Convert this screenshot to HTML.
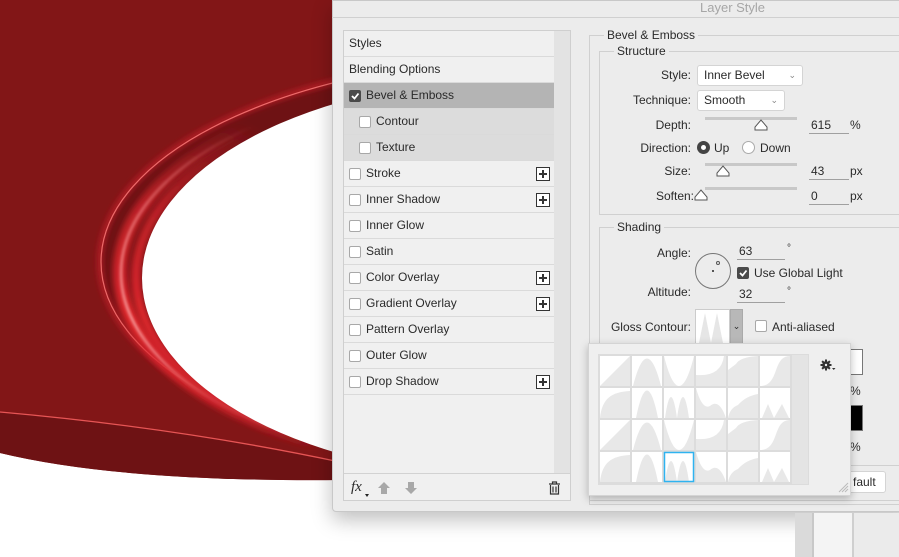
<!DOCTYPE html>
<html><head><style>
*{margin:0;padding:0;box-sizing:border-box}
body{width:899px;height:557px;overflow:hidden;background:#fff;font-family:"Liberation Sans",sans-serif;font-size:12px;color:#2a2a2a;position:relative}
.a{position:absolute}
.row{position:absolute;left:344px;width:210px;height:26px;border-bottom:1px solid #dadada;line-height:25px}
.cb{position:absolute;width:12px;height:12px;border:1px solid #a8a8a8;border-radius:2px;background:#fff;top:7px}
.cbc{background:#4a4a4a;border-color:#4a4a4a}
.plus{position:absolute;left:192px;top:6px;width:14px;height:14px;border:1px solid #333;background:#fff}
.plus:before{content:"";position:absolute;left:2px;top:5px;width:8px;height:2px;background:#333}
.plus:after{content:"";position:absolute;left:5px;top:2px;width:2px;height:8px;background:#333}
.lbl{position:absolute;text-align:right;width:120px}
.sel{position:absolute;background:#fff;border:1px solid #d4d4d4;border-radius:3px;height:21px;line-height:19px;padding-left:6px}
.trk{position:absolute;height:3px;background:#c8c8c8;width:92px;left:705px}
.val{position:absolute;border-bottom:1px solid #a0a0a0;width:40px;height:16px;line-height:14px;padding-left:2px}
</style></head><body>
<svg class="a" style="left:0;top:0" width="340" height="557">
<defs>
<filter id="bl"><feGaussianBlur stdDeviation="3"/></filter>
<filter id="bl2"><feGaussianBlur stdDeviation="1.2"/></filter>
<clipPath id="cp"><path d="M0,0 H340 V480 Q120,482 0,453 Z"/></clipPath>
<radialGradient id="g1" gradientUnits="userSpaceOnUse" cx="130" cy="320" r="230">
<stop offset="0" stop-color="#e0262c" stop-opacity="1"/><stop offset="0.5" stop-color="#d0232a" stop-opacity="0.8"/><stop offset="1" stop-color="#c0202a" stop-opacity="0"/></radialGradient>
<radialGradient id="g2" gradientUnits="userSpaceOnUse" cx="130" cy="320" r="230">
<stop offset="0" stop-color="#f39090" stop-opacity="1"/><stop offset="0.5" stop-color="#f08080" stop-opacity="0.6"/><stop offset="1" stop-color="#f08080" stop-opacity="0"/></radialGradient>
</defs>
<path d="M0,0 H340 V480 Q120,482 0,453 Z" fill="#821617"/>
<g clip-path="url(#cp)">
<path d="M0,412 Q180,428 340,462 V490 H0Z" fill="#6e1214"/>
<path d="M0,412 Q180,428 340,462" stroke="#e65555" stroke-width="1.3" fill="none"/>
<ellipse cx="560" cy="262" rx="460" ry="207" fill="#6e1214"/>
<ellipse cx="560" cy="262" rx="460" ry="207" fill="none" stroke="#b81f25" stroke-width="5" filter="url(#bl)"/>
<ellipse cx="560" cy="262" rx="459" ry="206" fill="none" stroke="#ee6a6a" stroke-width="1.2"/>
<ellipse cx="540" cy="272" rx="420" ry="202" fill="none" stroke="url(#g1)" stroke-width="14" filter="url(#bl)"/>
<ellipse cx="538" cy="273" rx="417" ry="201" fill="none" stroke="url(#g2)" stroke-width="3" filter="url(#bl2)"/>
<ellipse cx="528" cy="277" rx="392" ry="200" fill="none" stroke="url(#g1)" stroke-width="10" filter="url(#bl)"/>
<ellipse cx="520" cy="278" rx="378" ry="200" fill="#fff"/>
</g>
</svg>
<!-- dialog -->
<div class="a" style="left:332px;top:0;width:580px;height:512px;background:#ececec;border:1px solid #c8c8c8;box-shadow:0 8px 20px rgba(0,0,0,.25);border-radius:0 0 4px 4px"></div>
<div class="a" style="left:332px;top:17px;width:567px;height:1px;background:#d0d0d0"></div>
<div class="a" style="left:700px;top:0;font-size:13px;color:#a6a6a6">Layer Style</div>
<!-- left list -->
<div class="a" style="left:343px;top:30px;width:228px;height:471px;background:#f0f0f0;border:1px solid #cfcfcf"></div>
<div class="a" style="left:554px;top:31px;width:16px;height:442px;background:#e3e3e3"></div>
<div class="a" style="left:344px;top:473px;width:226px;height:1px;background:#d2d2d2"></div>
<div class="row" style="top:31px"><span class="a" style="left:5px">Styles</span></div>
<div class="row" style="top:57px"><span class="a" style="left:5px">Blending Options</span></div>
<div class="row" style="top:83px;background:#b4b4b4"><div class="cb cbc" style="left:5px"><svg width="10" height="10" class="a" style="left:0;top:0"><path d="M2,5 L4.5,7.5 L8.5,2.5" stroke="#fff" stroke-width="1.8" fill="none"/></svg></div><span class="a" style="left:22px">Bevel &amp; Emboss</span></div>
<div class="row" style="top:109px;background:#dcdcdc"><div class="cb" style="left:15px"></div><span class="a" style="left:32px">Contour</span></div>
<div class="row" style="top:135px;background:#dcdcdc"><div class="cb" style="left:15px"></div><span class="a" style="left:32px">Texture</span></div>
<div class="row" style="top:161px"><div class="cb" style="left:5px"></div><span class="a" style="left:22px">Stroke</span><div class="plus"></div></div>
<div class="row" style="top:187px"><div class="cb" style="left:5px"></div><span class="a" style="left:22px">Inner Shadow</span><div class="plus"></div></div>
<div class="row" style="top:213px"><div class="cb" style="left:5px"></div><span class="a" style="left:22px">Inner Glow</span></div>
<div class="row" style="top:239px"><div class="cb" style="left:5px"></div><span class="a" style="left:22px">Satin</span></div>
<div class="row" style="top:265px"><div class="cb" style="left:5px"></div><span class="a" style="left:22px">Color Overlay</span><div class="plus"></div></div>
<div class="row" style="top:291px"><div class="cb" style="left:5px"></div><span class="a" style="left:22px">Gradient Overlay</span><div class="plus"></div></div>
<div class="row" style="top:317px"><div class="cb" style="left:5px"></div><span class="a" style="left:22px">Pattern Overlay</span></div>
<div class="row" style="top:343px"><div class="cb" style="left:5px"></div><span class="a" style="left:22px">Outer Glow</span></div>
<div class="row" style="top:369px"><div class="cb" style="left:5px"></div><span class="a" style="left:22px">Drop Shadow</span><div class="plus"></div></div>
<div class="a" style="left:351px;top:479px;font-family:'Liberation Serif',serif;font-style:italic;font-size:15px">fx</div>
<div class="a" style="left:365px;top:494px;width:0;height:0;border:2px solid transparent;border-top:3px solid #222"></div>
<svg class="a" style="left:377px;top:481px" width="44" height="14"><path d="M7,1 L13,7 H10 V13 H4 V7 H1Z" fill="#a8a8a8"/><path d="M34,13 L40,7 H37 V1 H31 V7 H28Z" fill="#a8a8a8"/></svg>
<svg class="a" style="left:548px;top:481px" width="13" height="14"><path d="M1,3 H12 M4.5,3 V1 H8.5 V3 M2.5,4 V13 H10.5 V4 M5,5.5 V11.5 M8,5.5 V11.5" stroke="#333" stroke-width="1.2" fill="none"/></svg>
<!-- right -->
<div class="a" style="left:589px;top:35px;width:320px;height:470px;border:1px solid #d0d0d0"></div>
<div class="a" style="left:604px;top:28px;background:#ececec;padding:0 3px">Bevel &amp; Emboss</div>
<div class="a" style="left:599px;top:51px;width:310px;height:164px;border:1px solid #d0d0d0"></div>
<div class="a" style="left:614px;top:44px;background:#ececec;padding:0 3px">Structure</div>
<div class="lbl" style="left:571px;top:68px">Style:</div>
<div class="sel" style="left:697px;top:65px;width:106px">Inner Bevel<span class="a" style="right:6px;top:0;color:#888;font-size:9px">&#8964;</span></div>
<div class="lbl" style="left:571px;top:93px">Technique:</div>
<div class="sel" style="left:697px;top:90px;width:88px">Smooth<span class="a" style="right:6px;top:0;color:#888;font-size:9px">&#8964;</span></div>
<div class="lbl" style="left:571px;top:118px">Depth:</div>
<div class="trk" style="top:117px"></div>
<svg class="a" style="left:754px;top:119px" width="14" height="12"><path d="M1,11 L1,8 L7,1 L13,8 L13,11Z" fill="#fff" stroke="#555"/></svg>
<div class="val" style="left:809px;top:118px">615</div><div class="a" style="left:850px;top:118px">%</div>
<div class="lbl" style="left:571px;top:141px">Direction:</div>
<div class="a" style="left:697px;top:141px;width:13px;height:13px;border-radius:50%;background:#444"><div class="a" style="left:4px;top:4px;width:5px;height:5px;border-radius:50%;background:#fff"></div></div>
<div class="a" style="left:714px;top:141px">Up</div>
<div class="a" style="left:742px;top:141px;width:13px;height:13px;border-radius:50%;background:#fff;border:1px solid #aaa"></div>
<div class="a" style="left:760px;top:141px">Down</div>
<div class="lbl" style="left:571px;top:164px">Size:</div>
<div class="trk" style="top:163px"></div>
<svg class="a" style="left:716px;top:165px" width="14" height="12"><path d="M1,11 L1,8 L7,1 L13,8 L13,11Z" fill="#fff" stroke="#555"/></svg>
<div class="val" style="left:809px;top:164px">43</div><div class="a" style="left:850px;top:164px">px</div>
<div class="lbl" style="left:574px;top:189px">Soften:</div>
<div class="trk" style="top:187px"></div>
<svg class="a" style="left:694px;top:189px" width="14" height="12"><path d="M1,11 L1,8 L7,1 L13,8 L13,11Z" fill="#fff" stroke="#555"/></svg>
<div class="val" style="left:809px;top:189px">0</div><div class="a" style="left:850px;top:189px">px</div>
<div class="a" style="left:599px;top:227px;width:310px;height:239px;border:1px solid #d0d0d0"></div>
<div class="a" style="left:614px;top:220px;background:#ececec;padding:0 3px">Shading</div>
<div class="lbl" style="left:571px;top:246px">Angle:</div>
<div class="lbl" style="left:571px;top:285px">Altitude:</div>
<div class="a" style="left:695px;top:253px;width:36px;height:36px;border-radius:50%;border:1px solid #777"></div>
<div class="a" style="left:712px;top:270px;width:2px;height:2px;background:#555"></div>
<div class="a" style="left:716px;top:261px;width:4px;height:4px;border-radius:50%;border:1px solid #555"></div>
<div class="val" style="left:737px;top:244px;width:48px">63</div><div class="a" style="left:787px;top:243px;font-size:10px">°</div>
<div class="cb cbc" style="left:737px;top:267px"><svg width="10" height="10" class="a" style="left:0;top:0"><path d="M2,5 L4.5,7.5 L8.5,2.5" stroke="#fff" stroke-width="1.8" fill="none"/></svg></div>
<div class="a" style="left:754px;top:266px">Use Global Light</div>
<div class="val" style="left:737px;top:287px;width:48px">32</div><div class="a" style="left:787px;top:286px;font-size:10px">°</div>
<div class="lbl" style="left:571px;top:320px">Gloss Contour:</div>
<div class="a" style="left:695px;top:309px;width:35px;height:35px;background:#fff;border:1px solid #ccc"></div>
<svg class="a" style="left:696px;top:310px" width="33" height="33"><path d="M3,33 L9,3 L15,33 L21,3 L27,33Z" fill="#e6e6e6"/></svg>
<div class="a" style="left:730px;top:309px;width:13px;height:35px;background:#b8b8b8;border:1px solid #aaa;font-size:9px;text-align:center;line-height:33px">&#8964;</div>
<div class="cb" style="left:755px;top:320px"></div>
<div class="a" style="left:772px;top:320px">Anti-aliased</div>
<div class="a" style="left:850px;top:349px;width:13px;height:26px;background:#fff;border:1px solid #777"></div>
<div class="a" style="left:850px;top:384px">%</div>
<div class="a" style="left:850px;top:405px;width:13px;height:26px;background:#000;border:1px solid #777"></div>
<div class="a" style="left:850px;top:440px">%</div>
<div class="a" style="left:840px;top:471px;width:46px;height:22px;background:#fff;border:1px solid #d4d4d4;border-radius:3px;line-height:20px;padding-left:12px">fault</div>
<div class="a" style="left:589px;top:500px;width:310px;height:1px;background:#d0d0d0"></div>
<!-- below dialog right -->
<div class="a" style="left:795px;top:513px;width:17px;height:44px;background:#dadada"></div>
<div class="a" style="left:812px;top:513px;width:2px;height:44px;background:#c8c8c8"></div>
<div class="a" style="left:814px;top:513px;width:38px;height:44px;background:#f4f4f4"></div>
<div class="a" style="left:852px;top:513px;width:2px;height:44px;background:#cfcfcf"></div>
<div class="a" style="left:854px;top:513px;width:45px;height:44px;background:#ebebeb"></div>
<!-- popup -->
<div class="a" style="left:588px;top:343px;width:263px;height:153px;background:#efefef;border:1px solid #d4d4d4;box-shadow:0 3px 8px rgba(0,0,0,.25)"></div>
<div class="a" style="left:598px;top:354px;width:211px;height:131px;background:#dcdcdc"></div>
<div class="a" style="left:792px;top:355px;width:16px;height:129px;background:#e4e4e4"></div>
<svg class="a" style="left:599px;top:355px" width="193" height="129">
<defs>
<g id="r1">
<rect x="0" y="0" width="30" height="30" fill="#fff"/><path d="M0,30 L30,0 V30Z" fill="#e8e8e8"/>
<rect x="32" y="0" width="30" height="30" fill="#fff"/><path d="M33,30 Q47,-25 61,30Z" fill="#e8e8e8"/>
<rect x="64" y="0" width="30" height="30" fill="#fff"/><path d="M64,0 Q79,60 94,0 V30 H64Z" fill="#e8e8e8"/>
<rect x="96" y="0" width="30" height="30" fill="#fff"/><path d="M96,30 V19 Q121,21 124,0 H126 V30Z" fill="#e8e8e8"/>
<rect x="128" y="0" width="30" height="30" fill="#fff"/><path d="M128,30 V14 L136,8 Q140,1 158,0 V30Z" fill="#e8e8e8"/>
<rect x="160" y="0" width="30" height="30" fill="#fff"/><path d="M160,30 C180,30 172,0 190,0 V30Z" fill="#e8e8e8"/>
</g>
<g id="r2">
<rect x="0" y="0" width="30" height="30" fill="#fff"/><path d="M0,30 C2,10 12,4 30,3 V30Z" fill="#e8e8e8"/>
<rect x="32" y="0" width="30" height="30" fill="#fff"/><path d="M36,30 Q47,-25 58,30Z" fill="#e8e8e8"/>
<rect x="64" y="0" width="30" height="30" fill="#fff"/><path d="M65,30 Q71,-12 77,30 Q83,-12 89,30Z" fill="#e8e8e8"/>
<rect x="96" y="0" width="30" height="30" fill="#fff"/><path d="M96,0 Q102,22 110,18 Q119,10 126,30 H96Z" fill="#e8e8e8"/>
<rect x="128" y="0" width="30" height="30" fill="#fff"/><path d="M128,30 Q130,20 138,17 Q146,8 158,6 V30Z" fill="#e8e8e8"/>
<rect x="160" y="0" width="30" height="30" fill="#fff"/><path d="M162,30 L168,16 L174,30 L182,16 L189,30Z" fill="#e8e8e8"/>
</g>
</defs>
<use href="#r1" x="1" y="1"/><use href="#r2" x="1" y="33"/><use href="#r1" x="1" y="65"/><use href="#r2" x="1" y="97"/>
<rect x="65.5" y="97.5" width="29" height="29" fill="none" stroke="#2fb3f0" stroke-width="1.5"/>
</svg>
<svg class="a" style="left:820px;top:358px" width="18" height="14">
<g fill="#333"><rect x="5" y="1.5" width="2" height="11"/><rect x="0.5" y="6" width="11" height="2"/><rect x="5" y="1.5" width="2" height="11" transform="rotate(45 6 7)"/><rect x="5" y="1.5" width="2" height="11" transform="rotate(-45 6 7)"/></g>
<circle cx="6" cy="7" r="3.8" fill="#333"/><circle cx="6" cy="7" r="1.2" fill="#efefef"/><path d="M12,10 h3.5 l-1.75,2z" fill="#333"/></svg>
<svg class="a" style="left:837px;top:481px" width="12" height="12"><path d="M2,11 L11,2 M5,11 L11,5 M8,11 L11,8" stroke="#bbb"/></svg>
</body></html>
